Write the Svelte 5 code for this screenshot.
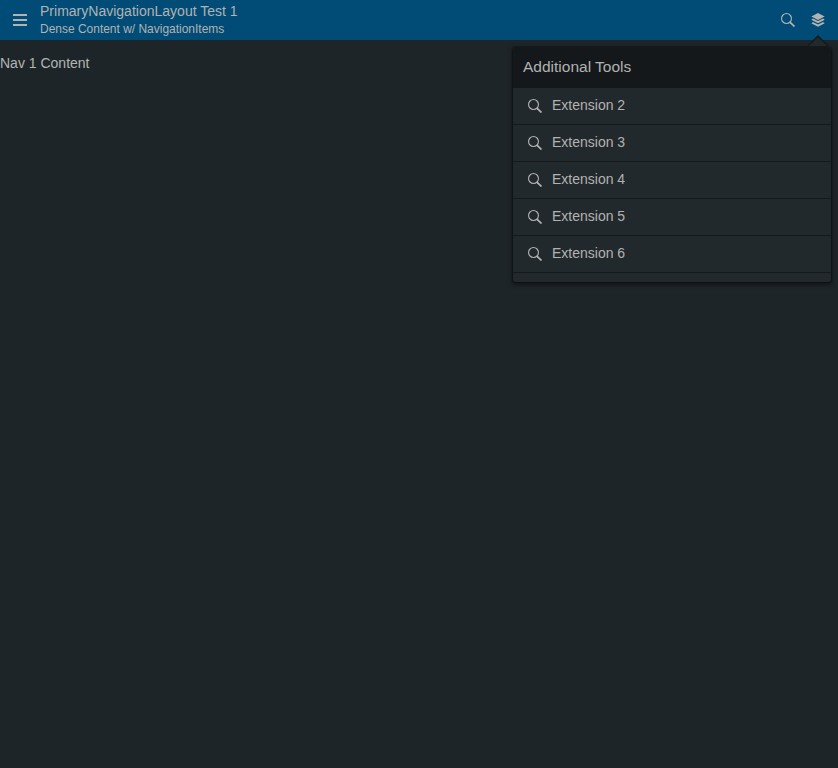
<script>
  const tools = [2, 3, 4, 5, 6].map((n) => `Extension ${n}`);
</script>

{#snippet searchIcon()}
  <svg class="icon" width="14" height="14" viewBox="0 0 14 14" aria-hidden="true">
    <circle cx="5.5" cy="5.5" r="4.95" fill="none" stroke="currentColor" stroke-width="1.1" />
    <path d="M8.8 9.2 9.4 8.6 14 12.9 12.8 14 9 10.2z" fill="currentColor" stroke="currentColor" stroke-width=".25" />
  </svg>
{/snippet}

<div class="app">
  <header>
    <button class="menu" aria-label="Menu">
      <svg width="14" height="12" viewBox="0 0 14 12"><path d="M0 0h14v2H0zM0 5h14v2H0zM0 10h14v2H0z" fill="currentColor" /></svg>
    </button>
    <div class="titles">
      <div class="title">PrimaryNavigationLayout Test 1</div>
      <div class="subtitle">Dense Content w/ NavigationItems</div>
    </div>
    <button class="tool" aria-label="Search">{@render searchIcon()}</button>
    <button class="tool" aria-label="Additional Tools">
      <svg width="14" height="14" viewBox="0 0 14 14" fill="currentColor">
        <path d="M7 0 13.7 3.5 7 7 .3 3.5z" />
        <path d="M2 5.4 7 8 12 5.4 13.7 6.7 7 10.3 .3 6.7z" />
        <path d="M2 8.9 7 11.4 12 8.9 13.7 10.2 7 13.8 .3 10.2z" />
      </svg>
    </button>
  </header>
  <main>Nav 1 Content</main>
  <section class="popup">
    <svg class="arrow" width="22" height="12" viewBox="0 0 22 12">
      <path d="M0 11 11 0 22 11z" fill="#15191b" />
      <path d="M2 11 11 2 20 11z" fill="#22292c" />
    </svg>
    <h2>Additional Tools</h2>
    <ul>
      {#each tools as tool}
        <li>{@render searchIcon()}<span>{tool}</span></li>
      {/each}
    </ul>
  </section>
</div>

<style>
  :global(body) { margin: 0; background: #1e2528; }
  .app {
    position: relative;
    height: 768px;
    overflow: hidden;
    background: #1e2528;
    color: #b2b5b6;
    font: 14px/20px "Liberation Sans", Arial, sans-serif;
  }
  header {
    display: flex;
    height: 40px;
    padding-right: 5px;
    box-sizing: border-box;
    background: #004c76;
    color: #b2b2b2;
  }
  button {
    display: flex;
    align-items: center;
    justify-content: center;
    padding: 0;
    border: 0;
    background: none;
    color: #b2b2b2;
  }
  .menu { width: 40px; }
  .tool { width: 30px; }
  .titles { flex: 1; padding-top: 2px; }
  .title { line-height: 18px; font-size: 14.03px; }
  .subtitle { font-size: 11.97px; line-height: 18px; }
  main { padding-top: 13px; }
  .popup {
    position: absolute;
    top: 47px;
    left: 513px;
    width: 318px;
    height: 235px;
    border-radius: 3px;
    background: #22292c;
    box-shadow: 0 0 0 1px rgba(0, 0, 0, 0.2), 0 2px 4px 1px rgba(0, 0, 0, 0.5);
  }
  .arrow { position: absolute; top: -12px; left: 294px; }
  h2 {
    height: 41px;
    margin: 0;
    padding: 0 10px;
    border-radius: 3px 3px 0 0;
    background: #14181a;
    color: #b2b2b2;
    font-size: 15.5px;
    font-weight: 400;
    line-height: 39px;
    box-sizing: border-box;
  }
  ul { margin: 0; padding: 0; list-style: none; }
  li {
    display: flex;
    gap: 10px;
    height: 37px;
    box-sizing: border-box;
    padding: 7px 15px 0;
    border-bottom: 1px solid #15191b;
    color: #b2b2b2;
  }
  li .icon { margin-top: 4px; }
</style>
